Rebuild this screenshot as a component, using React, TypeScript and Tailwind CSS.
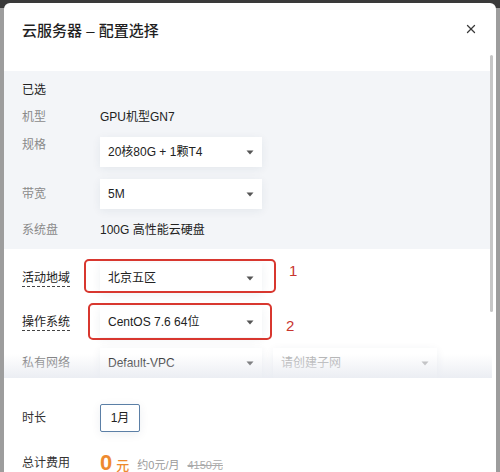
import { X } from "lucide-react";

const font = { fontFamily: '"Liberation Sans", "Noto Sans CJK SC", sans-serif' };

function Caret({ muted }: { muted?: boolean }) {
  return (
    <svg width="8" height="5" viewBox="0 0 8 5" className="shrink-0">
      <path d="M0.5 0.5 L7.5 0.5 L4 4.5 Z" fill={muted ? "#b5b5b5" : "#555"} />
    </svg>
  );
}

function Select({
  value,
  width = "w-[162px]",
  muted,
}: {
  value: string;
  width?: string;
  muted?: boolean;
}) {
  return (
    <div
      className={`flex h-[30px] ${width} items-center justify-between bg-white pl-[8px] pr-[8px] shadow-[0_2px_10px_rgba(30,50,90,0.07)]`}
    >
      <span className={`text-[12px] ${muted ? "text-[#b0b0b0]" : "text-[#222]"}`}>{value}</span>
      <Caret muted={muted} />
    </div>
  );
}

export default function App() {
  return (
    <div className="relative h-[472px] w-[500px] overflow-hidden bg-[#9d9d9d]" style={font}>
      <div className="absolute left-0 top-0 h-[8px] w-[500px] bg-[#3a3a3a]" />
      <div className="h-[3px]" />

      <div className="relative z-10 mx-[4px] flex h-[469px] w-[492px] flex-col overflow-hidden rounded-t-[6px] bg-white">
        {/* header */}
        <div className="flex h-[68px] shrink-0 items-start justify-between pl-[18px] pr-[18px] pt-[18px]">
          <h1 className="text-[15px] font-medium leading-[20px] text-[#1f1f1f]">云服务器 – 配置选择</h1>
          <X size={14} strokeWidth={2.2} className="mt-[1px] text-[#3a3a3a]" />
        </div>

        <div className="flex w-[486px] flex-col">
          {/* selected summary */}
          <div className="flex h-[178px] flex-col bg-[#f3f5f8] px-[18px] pt-[8px] text-[12px]">
            <div className="flex h-[22px] items-center text-[#222]">已选</div>
            <div className="mt-[5px] flex h-[22px] items-center">
              <span className="w-[78px] text-[#8a8a8a]">机型</span>
              <span className="text-[#222]">GPU机型GN7</span>
            </div>
            <div className="mt-[6px] flex items-start">
              <span className="w-[78px] leading-[22px] text-[#8a8a8a]">规格</span>
              <div className="mt-[3px]">
                <Select value="20核80G + 1颗T4" />
              </div>
            </div>
            <div className="mt-[12px] flex items-center">
              <span className="w-[78px] text-[#8a8a8a]">带宽</span>
              <Select value="5M" />
            </div>
            <div className="mt-[10px] flex h-[22px] items-center">
              <span className="w-[78px] text-[#8a8a8a]">系统盘</span>
              <span className="text-[#222]">100G 高性能云硬盘</span>
            </div>
          </div>

          {/* white form part */}
          <div className="flex flex-col px-[18px] pt-[14px] text-[12px]">
            <div className="flex h-[30px] items-center">
              <span className="w-[78px]">
                <span className="border-b border-dashed border-[#444] pb-[1px] text-[#222]">活动地域</span>
              </span>
              <div className="relative">
                <Select value="北京五区" />
                <div className="absolute left-[-16px] top-[-4px] h-[34px] w-[192px] rounded-[5px] border-2 border-[#d8372f]" />
                <span className="absolute left-[189px] top-[0px] text-[15px] leading-[15px] text-[#c8352e]">1</span>
              </div>
            </div>
            <div className="mt-[14px] flex h-[30px] items-center">
              <span className="w-[78px]">
                <span className="border-b border-dashed border-[#444] pb-[1px] text-[#222]">操作系统</span>
              </span>
              <div className="relative">
                <Select value="CentOS 7.6 64位" />
                <div className="absolute left-[-12px] top-[-4px] h-[37px] w-[184px] rounded-[5px] border-2 border-[#d8372f]" />
                <span className="absolute left-[186px] top-[11px] text-[15px] leading-[15px] text-[#c8352e]">2</span>
              </div>
            </div>
            <div className="mt-[11px] flex h-[30px] items-center">
              <span className="w-[78px] text-[#777]">私有网络</span>
              <Select value="Default-VPC" />
              <div className="ml-[11px]">
                <Select value="请创建子网" width="w-[164px]" muted />
              </div>
            </div>
          </div>
        </div>

        {/* footer */}
        <div className="relative flex flex-1 flex-col bg-white px-[18px] pt-[26px] text-[12px]">
          <div className="pointer-events-none absolute left-0 top-[-24px] h-[24px] w-[488px] bg-gradient-to-b from-white/0 to-[#e6e9f0]/80" />
          <div className="flex h-[28px] items-center">
            <span className="w-[78px] text-[#333]">时长</span>
            <div className="flex h-[28px] w-[40px] items-center justify-center rounded-[2px] border border-[#5b7fa6] bg-white text-[#222] shadow-[0_2px_10px_rgba(30,50,90,0.08)]">
              1月
            </div>
          </div>
          <div className="mt-[17px] flex h-[28px] items-center">
            <span className="w-[78px] text-[#333]">总计费用</span>
            <span className="text-[22px] font-bold leading-[22px] text-[#ee8a2f]">0</span>
            <span className="ml-[4px] mt-[5px] text-[13px] font-medium text-[#ee8a2f]">元</span>
            <span className="ml-[8px] mt-[5px] text-[11px] text-[#9a9a9a]">约0元/月</span>
            <span className="ml-[8px] mt-[5px] text-[11px] text-[#aaa] line-through">4150元</span>
          </div>
        </div>

        {/* scrollbar */}
        <div className="absolute right-[3px] top-[52px] h-[257px] w-[3px] rounded-full bg-[#c6c6c6]" />
      </div>
    </div>
  );
}
